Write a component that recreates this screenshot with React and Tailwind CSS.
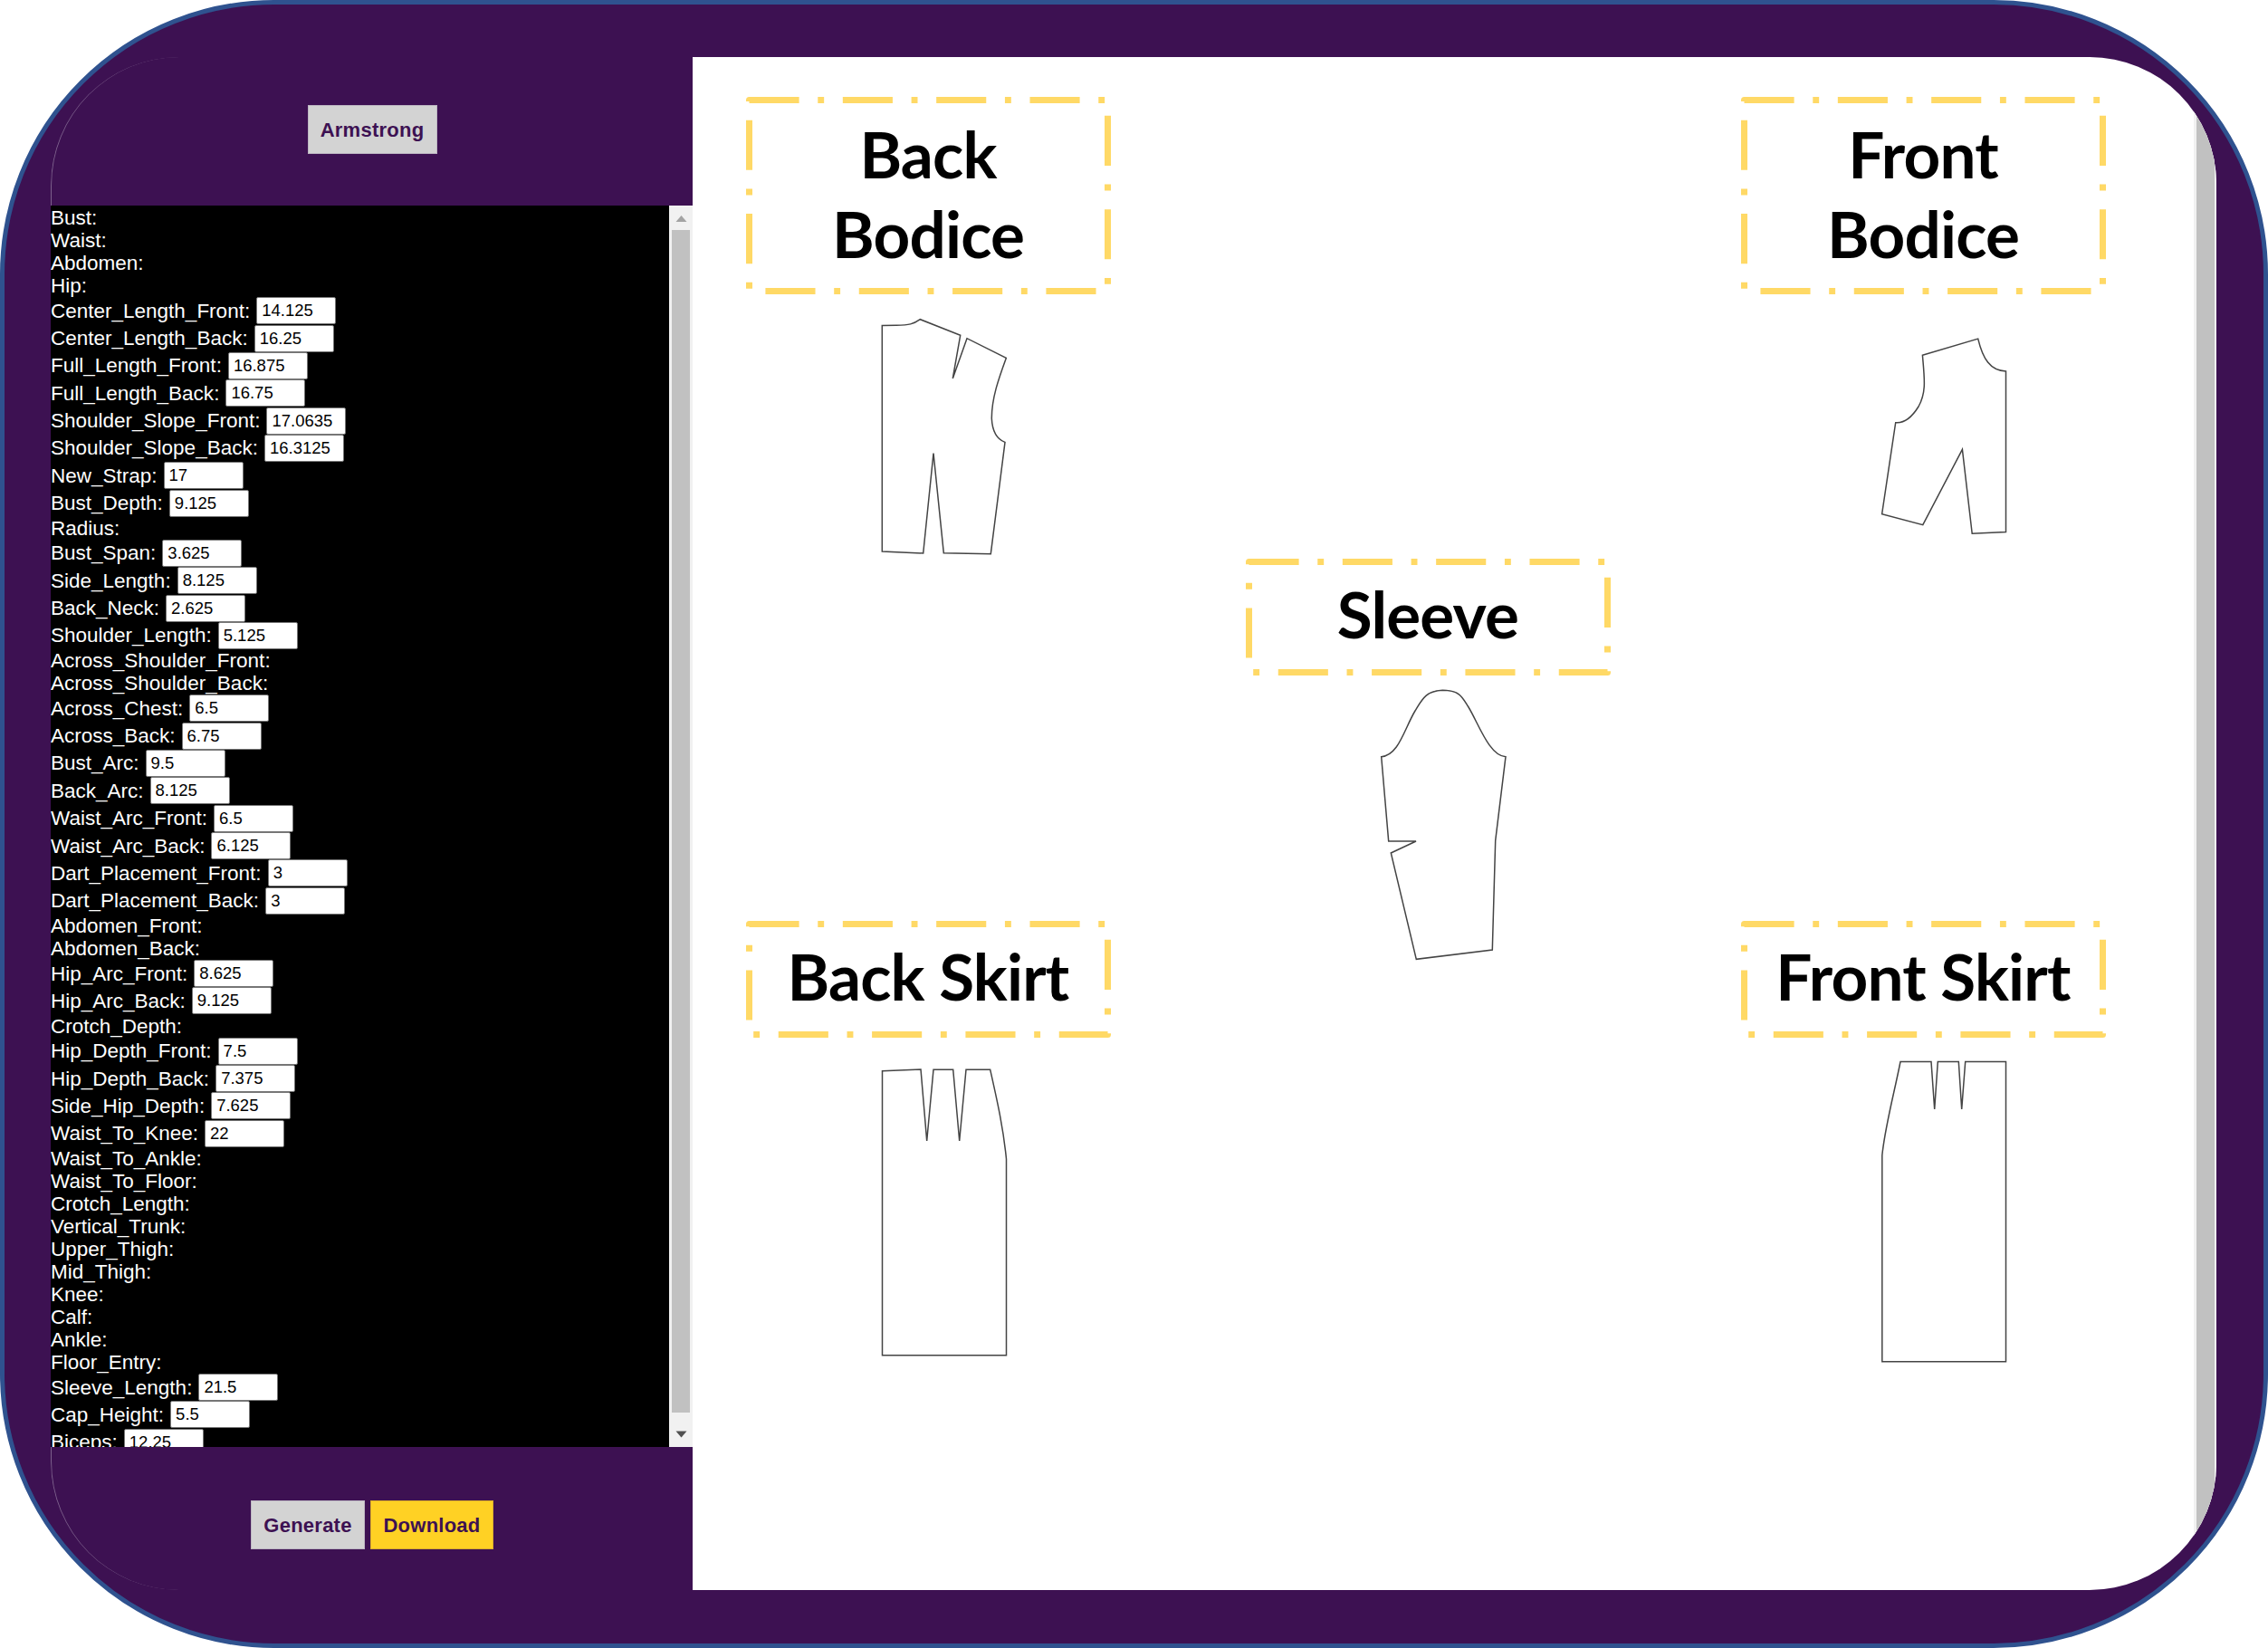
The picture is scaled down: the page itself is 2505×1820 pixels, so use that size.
const MEASUREMENTS = [
  ['Bust'], ['Waist'], ['Abdomen'], ['Hip'],
  ['Center_Length_Front', '14.125'], ['Center_Length_Back', '16.25'],
  ['Full_Length_Front', '16.875'], ['Full_Length_Back', '16.75'],
  ['Shoulder_Slope_Front', '17.0635'], ['Shoulder_Slope_Back', '16.3125'],
  ['New_Strap', '17'], ['Bust_Depth', '9.125'], ['Radius'],
  ['Bust_Span', '3.625'], ['Side_Length', '8.125'], ['Back_Neck', '2.625'],
  ['Shoulder_Length', '5.125'], ['Across_Shoulder_Front'], ['Across_Shoulder_Back'],
  ['Across_Chest', '6.5'], ['Across_Back', '6.75'], ['Bust_Arc', '9.5'],
  ['Back_Arc', '8.125'], ['Waist_Arc_Front', '6.5'], ['Waist_Arc_Back', '6.125'],
  ['Dart_Placement_Front', '3'], ['Dart_Placement_Back', '3'],
  ['Abdomen_Front'], ['Abdomen_Back'],
  ['Hip_Arc_Front', '8.625'], ['Hip_Arc_Back', '9.125'], ['Crotch_Depth'],
  ['Hip_Depth_Front', '7.5'], ['Hip_Depth_Back', '7.375'], ['Side_Hip_Depth', '7.625'],
  ['Waist_To_Knee', '22'], ['Waist_To_Ankle'], ['Waist_To_Floor'], ['Crotch_Length'],
  ['Vertical_Trunk'], ['Upper_Thigh'], ['Mid_Thigh'], ['Knee'], ['Calf'], ['Ankle'],
  ['Floor_Entry'], ['Sleeve_Length', '21.5'], ['Cap_Height', '5.5'], ['Biceps', '12.25'],
];

function Measurement({ name, value }) {
  if (value === undefined) {
    return <div className="h-[25px] shrink-0 leading-[25px]">{name}:</div>;
  }
  return (
    <label className="flex h-[30.35px] shrink-0 items-center gap-[7px]">
      <span className="leading-[25px]">{name}:</span>
      <input
        defaultValue={value}
        className="h-[30px] w-[88px] rounded-[2px] border border-[#767676] bg-white pl-[5px] text-[18.5px] text-black outline-none"
      />
    </label>
  );
}

function Button({ className, children }) {
  return (
    <button className={`h-[54px] border pt-[1px] text-[22px] font-bold tracking-[0.25px] text-[#3d1152] ${className}`}>
      {children}
    </button>
  );
}

function Scrollbar() {
  return (
    <div className="flex w-[26px] shrink-0 flex-col items-center bg-[#f1f1f1]">
      <svg className="h-[27px] w-[26px]" viewBox="0 0 26 27">
        <path d="M7.5 18h12l-6-7z" fill="#a3a3a3" />
      </svg>
      <div className="w-[20.5px] flex-1 bg-[#c1c1c1]" />
      <svg className="h-[38px] w-[26px]" viewBox="0 0 26 38">
        <path d="M7.5 20.5h12l-6 7z" fill="#505050" />
      </svg>
    </div>
  );
}

function Sidebar() {
  return (
    <aside className="flex w-[709px] shrink-0 flex-col">
      <div className="flex h-[164px] justify-center rounded-tl-[142px] border-l border-[#7d608c] bg-[#3d1152] pt-[53px]">
        <Button className="w-[143px] border-[#bdb6c2] bg-[#d3d3d3]">Armstrong</Button>
      </div>
      <div className="flex h-[1371px] overflow-hidden bg-black">
        <div className="flex flex-1 flex-col overflow-hidden pt-[1px] text-[22.5px] text-white">
          {MEASUREMENTS.map(([name, value]) => (
            <Measurement key={name} name={name} value={value} />
          ))}
        </div>
        <Scrollbar />
      </div>
      <div className="flex flex-1 justify-center gap-[6px] rounded-bl-[142px] border-l border-[#7d608c] bg-[#3d1152] pt-[59px]">
        <Button className="w-[126px] border-[#bdb6c2] bg-[#d3d3d3]">Generate</Button>
        <Button className="w-[136px] border-[#dcae2b] bg-[#ffd124]">Download</Button>
      </div>
    </aside>
  );
}

function Title({ lines, height, className }) {
  return (
    <div className={`relative flex w-[403px] flex-col items-center ${className}`} style={{ height }}>
      <svg className="absolute inset-0" width="403" height={height}>
        <path
          d={`M3.5 3.5H399.5V${height - 3.5}H3.5Z`}
          fill="none"
          stroke="#ffd966"
          strokeWidth="7"
          strokeLinejoin="round"
          strokeDasharray="55.1 20.67 6.89 20.67"
        />
      </svg>
      {lines.map((line) => (
        <h2
          key={line}
          className="-ml-[1px] whitespace-pre text-center font-[Lato,sans-serif] text-[71px] font-bold leading-[88px] tracking-[-0.8px] text-black"
        >
          {line}
        </h2>
      ))}
    </div>
  );
}

function Pattern({ viewBox, width, height, d, className }) {
  return (
    <svg className={className} width={width} height={height} viewBox={viewBox} fill="none" stroke="#444" strokeWidth="1.5">
      <path d={d} />
    </svg>
  );
}

function Workspace() {
  return (
    <main className="flex flex-1 bg-white">
      <div className="flex w-[462px] flex-col pl-[59px]">
        <Title lines={['Back', 'Bodice']} height={218} className="mt-[44px] pt-[19px]" />
        <Pattern
          className="ml-[146px] mt-[25px]"
          width="145" height="264" viewBox="970 350 145 264"
          d="M974.3 359.6L990 359.3C1004 359 1009 358 1016.3 352.7L1060.7 370.3L1052.3 418L1068 373.7L1111.3 395.4C1103 418 1095.3 440 1095.3 462C1096 477 1101 485 1110 488.4L1094.3 611.7L1042.3 610.7L1031 500.5L1019.7 611L974.3 609Z"
        />
        <Title lines={['Back Skirt']} height={129} className="mt-[403px] pt-[17px]" />
        <Pattern
          className="ml-[146px] mt-[29px]"
          width="145" height="335" viewBox="970 1175 145 335"
          d="M974.5 1182.7L1017 1181L1023.7 1260L1031 1181.3H1052.7L1059.7 1260L1067 1181.3H1093.7C1101 1214 1108 1244 1111.5 1280V1496.7H974.5Z"
        />
      </div>
      <div className="flex w-[640px] flex-col pl-[149px]">
        <Title lines={['Sleeve']} height={129} className="mt-[554px] pt-[17px]" />
        <Pattern
          className="ml-[144px] mt-[9px]"
          width="150" height="310" viewBox="1520 755 150 310"
          d="M1525.7 835.7C1545 834 1551 805 1563 785C1571 772 1575 763 1593.3 762.3C1613 762.5 1615 770 1622 781C1633 799 1645 835 1663 835.7L1651.7 928.3L1648.3 1049L1564.3 1059.3L1536.3 942L1564 929H1533.7Z"
        />
      </div>
      <div className="flex flex-1 flex-col pl-[56px]">
        <Title lines={['Front', 'Bodice']} height={218} className="mt-[44px] pt-[19px]" />
        <Pattern
          className="ml-[147px] mt-[45px]"
          width="150" height="225" viewBox="2070 370 150 225"
          d="M2123.4 392.3L2184.7 374.1C2190 396 2198 409.5 2215.5 409.9V587.6L2178.2 589.3L2167.4 496.3L2123.8 579.7L2078.6 567.6L2093.7 466.7C2106 468 2114 457 2119 449C2128 433 2125.5 418 2123.4 392.3Z"
        />
        <Title lines={['Front Skirt']} height={129} className="mt-[422px] pt-[17px]" />
        <Pattern
          className="ml-[147px] mt-[19px]"
          width="150" height="345" viewBox="2070 1165 150 345"
          d="M2099 1172.5H2133L2136.7 1225L2140.3 1172.5H2163.3L2166.7 1225L2170.7 1172.5H2215.5V1503.7H2078.8V1276C2082 1244 2092 1208 2099 1172.5Z"
        />
      </div>
      <div className="flex w-[25px] shrink-0 bg-[#f1f1f1] pl-[3px]">
        <div className="w-[20px] bg-[#c1c1c1]" />
      </div>
    </main>
  );
}

export default function App() {
  return (
    <div className="h-[1820px] w-[2505px] bg-white font-['Liberation_Sans',Arial,sans-serif]">
      <div className="flex h-full w-full rounded-[303px] border-[5px] border-[#2f528f] bg-[#3d1152] pb-[59px] pl-[51px] pr-[52px] pt-[58px]">
        <div className="flex flex-1 overflow-hidden rounded-[140px]">
          <Sidebar />
          <Workspace />
        </div>
      </div>
    </div>
  );
}
